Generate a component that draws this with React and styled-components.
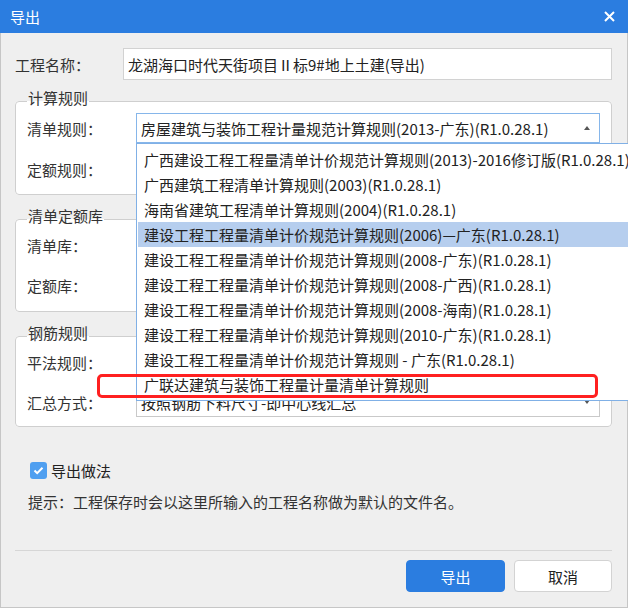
import React from "react";
import styled, { createGlobalStyle } from "styled-components";

const GlobalStyle = createGlobalStyle`
  html, body {
    margin: 0;
    padding: 0;
    overflow: hidden;
    background: #efefef;
  }
  body {
    font-family: "Noto Sans CJK SC", "Noto Sans", sans-serif;
    font-size: 15px;
    color: #222;
  }
`;

const Window = styled.div`
  position: relative;
  width: 628px;
  height: 608px;
  display: flex;
  flex-direction: column;
  background: #efefef;
  overflow: hidden;
`;

const TitleBar = styled.div`
  height: 33px;
  flex-shrink: 0;
  background: #2b7de0;
  color: #fff;
  display: flex;
  align-items: center;
  justify-content: space-between;
  padding: 0 13px 0 10px;
  font-size: 15px;
`;

const Body = styled.div`
  flex: 1;
  display: flex;
  flex-direction: column;
  border: 1px solid #c6c6c6;
  border-top: none;
  padding: 0 15px 14px 14px;
`;

const NameRow = styled.div`
  display: grid;
  grid-template-columns: 108px 1fr;
  align-items: center;
  margin-top: 15px;
`;

const Label = styled.span`
  color: #333;
  white-space: nowrap;
`;

const TextInput = styled.div`
  height: 32px;
  box-sizing: border-box;
  border: 1px solid #d2d2d2;
  background: #fff;
  display: flex;
  align-items: center;
  padding-left: 4px;
  color: #222;
`;

const Group = styled.fieldset`
  margin: ${(p) => p.$top}px 0 0 0;
  border: 1px solid #cfcfcf;
  border-radius: 4px;
  background: #fff;
  padding: ${(p) => p.$pad};
  min-width: 0;
  display: grid;
  grid-template-columns: 109px 1fr;
  row-gap: ${(p) => p.$gap}px;
  align-items: center;
`;

const Legend = styled.legend`
  padding: 0 1px 6px;
  line-height: 16px;
  color: #333;
`;

const Combo = styled.div`
  height: 30px;
  box-sizing: border-box;
  border: 1px solid ${(p) => (p.$focused ? "#86b6ea" : "#c9c9c9")};
  background: #fff;
  display: flex;
  align-items: center;
  justify-content: space-between;
  padding: 0 9px 0 4px;
  white-space: nowrap;
  overflow: hidden;
`;

const Arrow = styled.span`
  width: 0;
  height: 0;
  border-left: 3.5px solid transparent;
  border-right: 3.5px solid transparent;
  ${(p) =>
    p.$up
      ? "border-bottom: 4px solid #555;"
      : "border-top: 4px solid #555;"}
`;

const DropList = styled.div`
  position: absolute;
  left: 136px;
  top: 143px;
  width: 520px;
  box-sizing: border-box;
  padding: 3px 0;
  border: 1px solid #80b0e6;
  background: #fff;
  z-index: 2;
`;

const Item = styled.div`
  height: 25px;
  line-height: 25px;
  padding-left: 6px;
  margin: 0 1px;
  white-space: nowrap;
  color: #222;
  background: ${(p) => (p.$selected ? "#b6ceee" : "transparent")};
`;

const Marker = styled.div`
  position: absolute;
  left: 97px;
  top: 374px;
  width: 501px;
  height: 24px;
  box-sizing: border-box;
  border: 3px solid #ff2020;
  border-radius: 5px;
  z-index: 3;
`;

const CheckRow = styled.label`
  display: flex;
  align-items: center;
  gap: 4px;
  margin: 35px 0 0 15px;
  height: 17px;
  color: #222;
`;

const CheckBox = styled.span`
  width: 17px;
  height: 17px;
  border-radius: 3px;
  background: #4f9ff0;
  display: flex;
  align-items: center;
  justify-content: center;
`;

const Hint = styled.div`
  margin: 13px 0 0 13px;
  line-height: 20px;
  color: #333;
`;

const Separator = styled.div`
  height: 1px;
  background: #d6d6d6;
  margin-top: 38px;
`;

const Buttons = styled.div`
  display: flex;
  justify-content: flex-end;
  gap: 9px;
  margin-top: 9px;
`;

const Button = styled.button`
  width: ${(p) => p.$w}px;
  height: 32px;
  border-radius: 4px;
  font: inherit;
  font-size: 15px;
  cursor: pointer;
  border: 1px solid ${(p) => (p.$primary ? "#2b7de0" : "#d3d3d3")};
  background: ${(p) => (p.$primary ? "#2b7de0" : "#fff")};
  color: ${(p) => (p.$primary ? "#fff" : "#222")};
`;

const items = [
  "广西建设工程工程量清单计价规范计算规则(2013)-2016修订版(R1.0.28.1)",
  "广西建筑工程清单计算规则(2003)(R1.0.28.1)",
  "海南省建筑工程清单计算规则(2004)(R1.0.28.1)",
  "建设工程工程量清单计价规范计算规则(2006)—广东(R1.0.28.1)",
  "建设工程工程量清单计价规范计算规则(2008-广东)(R1.0.28.1)",
  "建设工程工程量清单计价规范计算规则(2008-广西)(R1.0.28.1)",
  "建设工程工程量清单计价规范计算规则(2008-海南)(R1.0.28.1)",
  "建设工程工程量清单计价规范计算规则(2010-广东)(R1.0.28.1)",
  "建设工程工程量清单计价规范计算规则 - 广东(R1.0.28.1)",
  "广联达建筑与装饰工程量计量清单计算规则",
];

const CloseIcon = () => (
  <svg width="11" height="11" viewBox="0 0 11 11">
    <path d="M1 1L10 10M10 1L1 10" stroke="#fff" strokeWidth="2" />
  </svg>
);

const CheckIcon = () => (
  <svg width="11" height="9" viewBox="0 0 11 9">
    <path d="M1.5 4.5L4.2 7.2L9.5 1.8" stroke="#fff" strokeWidth="2" fill="none" />
  </svg>
);

export default function App() {
  return (
    <Window>
      <GlobalStyle />
      <TitleBar>
        <span>导出</span>
        <CloseIcon />
      </TitleBar>
      <Body>
        <NameRow>
          <Label>工程名称：</Label>
          <TextInput>龙湖海口时代天街项目Ⅱ标9#地上土建(导出)</TextInput>
        </NameRow>

        <Group $top={10} $pad="1px 11px 10px" $gap={11}>
          <Legend>计算规则</Legend>
          <Label>清单规则：</Label>
          <Combo $focused>
            <span>房屋建筑与装饰工程计量规范计算规则(2013-广东)(R1.0.28.1)</span>
            <Arrow $up />
          </Combo>
          <Label>定额规则：</Label>
          <Combo>
            <span />
            <Arrow />
          </Combo>
        </Group>

        <Group $top={13} $pad="0 11px 11px" $gap={10}>
          <Legend>清单定额库</Legend>
          <Label>清单库：</Label>
          <Combo>
            <span />
            <Arrow />
          </Combo>
          <Label>定额库：</Label>
          <Combo>
            <span />
            <Arrow />
          </Combo>
        </Group>

        <Group $top={13} $pad="0 11px 9px" $gap={10}>
          <Legend>钢筋规则</Legend>
          <Label>平法规则：</Label>
          <Combo>
            <span />
            <Arrow />
          </Combo>
          <Label>汇总方式：</Label>
          <Combo>
            <span>按照钢筋下料尺寸-即中心线汇总</span>
            <Arrow />
          </Combo>
        </Group>

        <CheckRow>
          <CheckBox>
            <CheckIcon />
          </CheckBox>
          导出做法
        </CheckRow>
        <Hint>提示：工程保存时会以这里所输入的工程名称做为默认的文件名。</Hint>

        <Separator />
        <Buttons>
          <Button $primary $w={99}>导出</Button>
          <Button $w={98}>取消</Button>
        </Buttons>
      </Body>

      <DropList>
        {items.map((t, i) => (
          <Item key={t} $selected={i === 3}>
            {t}
          </Item>
        ))}
      </DropList>
      <Marker />
    </Window>
  );
}
